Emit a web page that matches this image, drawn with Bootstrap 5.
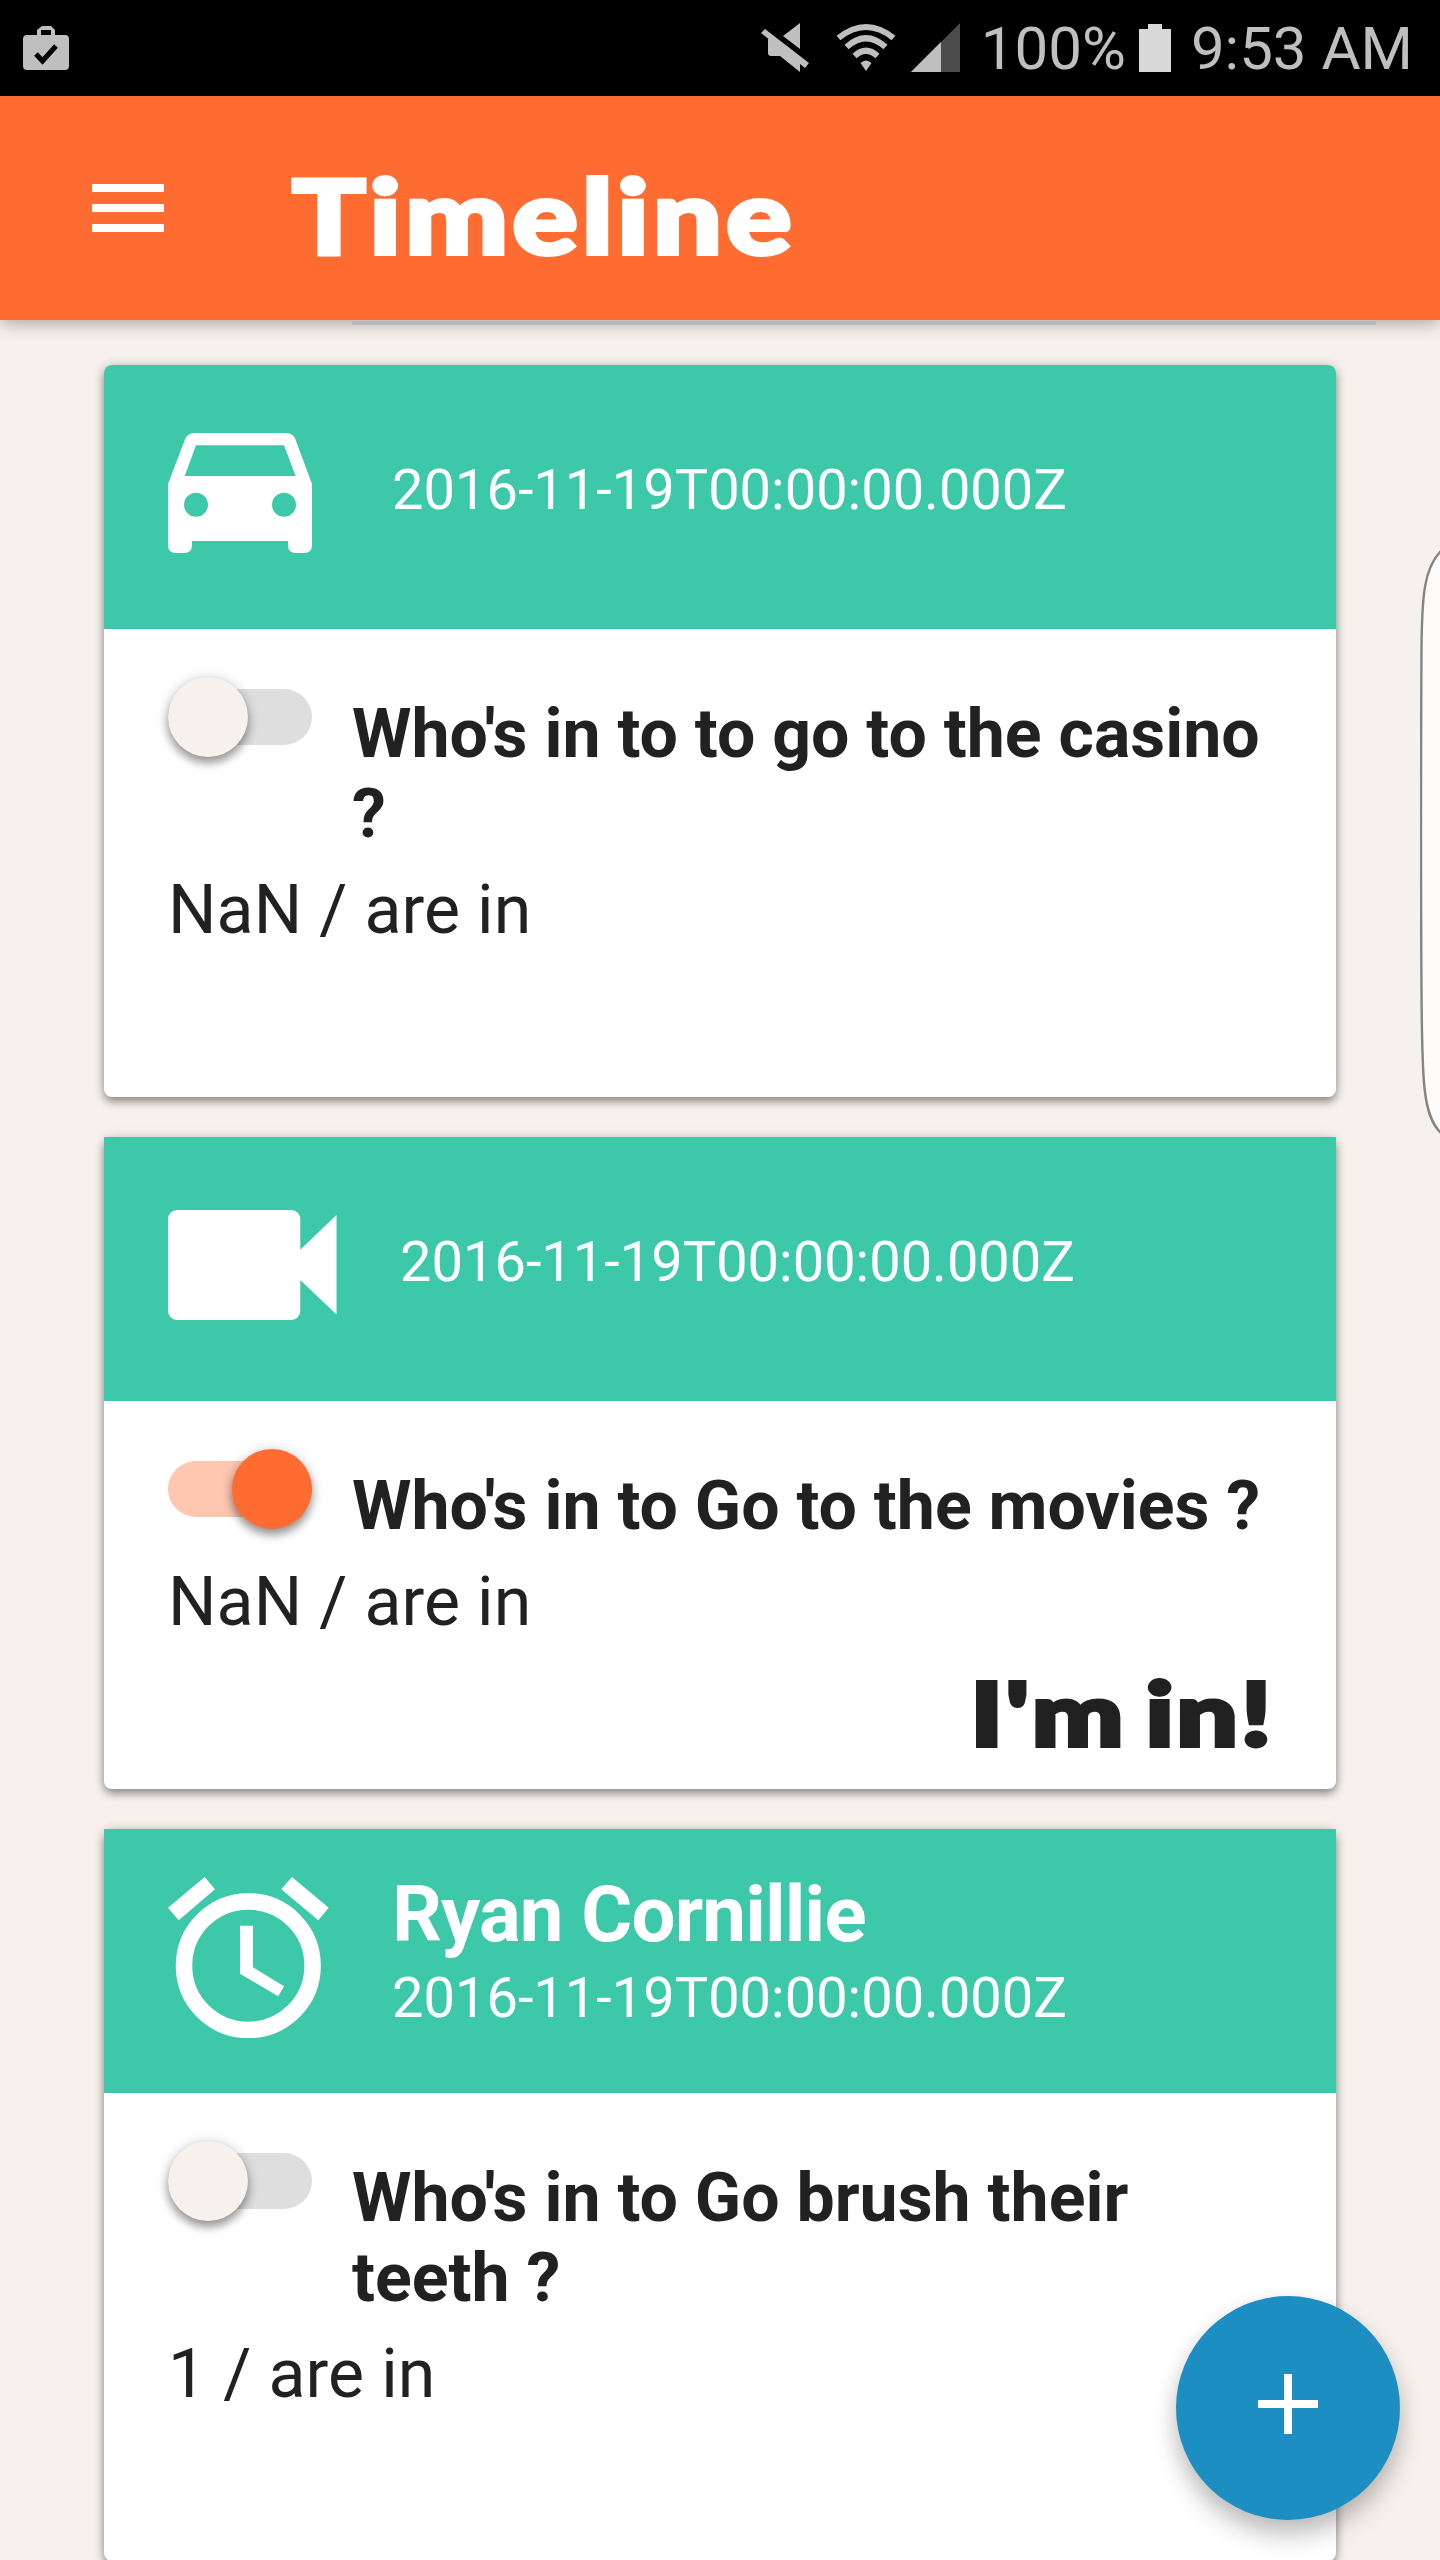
<!DOCTYPE html>
<html lang="en">
<head>
<meta charset="utf-8">
<meta name="viewport" content="width=device-width, initial-scale=1">
<title>Timeline</title>
<link href="https://cdn.jsdelivr.net/npm/bootstrap@5.3.0/dist/css/bootstrap.min.css" rel="stylesheet">
<style>
  body { font-family: Roboto, sans-serif; background: #f7f1ed; color: #212121; width: 1440px; height: 2560px; overflow: hidden; }
  svg { display: block; flex: none; }
  .statusbar { height: 96px; background: #000; color: #bfbfbf; font-size: 60px; line-height: 70px; padding: 0 27px 0 22px; }
  .statusbar span { white-space: nowrap; padding-top: 2px; }
  .appbar { height: 224px; background: #ff6c32; padding: 0 0 0 92px; box-shadow: 0 4px 16px rgba(0,0,0,.3); z-index: 2; }
  .display-face { font-family: Lato, sans-serif; font-weight: 900; white-space: nowrap; }
  .appbar h1 { font-size: 102px; line-height: 120px; color: #fff; margin: 14px 0 0 128px; letter-spacing: 3.3px; -webkit-text-stroke: 4px #fff; transform: scaleX(1.2); transform-origin: left; }
  .prev-edge { height: 4px; margin: 1px 64px 0 352px; background: #b8b8b6; z-index: 3; }
  .feed { padding: 40px 104px 0; }
  .event { border: 0; border-radius: 8px; height: 732px; margin-bottom: 40px; background: #fff; box-shadow: 0 5px 9px rgba(0,0,0,.36), 0 0 12px rgba(0,0,0,.16); }
  .event-short { height: 652px; }
  .event-head { height: 264px; background: #3ec8aa; color: #fff; padding: 0 64px 8px; }
  .event:first-child .event-head { border-radius: 8px 8px 0 0; }
  .event-icon { width: 224px; }
  .event-icon-wide { width: 232px; }
  .stamp { font-size: 56px; line-height: 76px; white-space: nowrap; padding-bottom: 6px; }
  .owner + .stamp { padding-bottom: 8px; }
  .owner { font-size: 78px; line-height: 90px; font-weight: 700; white-space: nowrap; letter-spacing: -.85px; }
  .event-main { padding: 48px 64px 0; }
  .switch { width: 144px; height: 56px; border-radius: 28px; background: #dedede; margin: 12px 40px 0 0; flex: none; }
  .switch i { display: block; width: 80px; height: 80px; border-radius: 50%; margin-top: -12px; background: #f7f1ed; box-shadow: 0 6px 10px rgba(0,0,0,.38), 0 0 14px rgba(0,0,0,.13); }
  .switch.active { background: #ffc6b0; }
  .switch.active i { background: #ff6c32; margin-left: 64px; }
  .question { font-size: 68px; line-height: 80px; font-weight: 700; padding-top: 17px; margin: 0; }
  .tally { font-size: 68px; line-height: 96px; margin: 8px 0 0; letter-spacing: .1px; }
  .answer { font-size: 87px; line-height: 110px; margin: 8px -2px 0 0; text-align: right; letter-spacing: 2px; word-spacing: -7px; -webkit-text-stroke: 4px #212121; transform: scaleX(1.25); transform-origin: right; }
  .edge-handle { position: absolute; right: 0; top: 548px; z-index: 1; }
  .fab { position: absolute; left: 1176px; top: 2296px; width: 224px; height: 224px; padding: 0 0 8px; background: #1d8ec1; border: 0; z-index: 4; box-shadow: 0 16px 24px rgba(0,0,0,.22), 0 4px 20px rgba(0,0,0,.08); }
</style>
</head>
<body class="position-relative">
<header class="statusbar d-flex align-items-center">
  <svg class="me-auto" width="48" height="46" viewBox="0 0 48 46"><path fill="#bfbfbf" fill-rule="evenodd" d="M15 10V5l5-4h9l4 4v5h10q4 0 4 4v27q0 4-4 4H5q-4 0-4-4V14q0-4 4-4zM19 10h10V5H19z"/><path d="M14 29l6.500 7L34 21" fill="none" stroke="#000" stroke-width="5"/></svg>
  <svg width="49" height="50" viewBox="0 0 49 50" fill="#bfbfbf"><path d="M4 6l44 34-4 5L0 10z"/><path d="M39 0v26L22 13z"/><path d="M7 16v14q0 3 3 3h9l20 16V37L12 16z"/></svg>
  <svg width="60" height="50" viewBox="0 0 60 50" style="margin-left:26px"><g fill="none" stroke="#bfbfbf" stroke-width="6"><path d="M2.500 15Q30-7 57.500 15"/><path d="M10.500 24Q30 6.500 49.500 24"/><path d="M18.500 33Q30 22.500 41.500 33"/></g><path fill="#bfbfbf" d="M24.500 40q5.500-5 11 0L30 48z"/></svg>
  <svg width="49" height="50" viewBox="0 0 49 50" style="margin-left:15px"><path fill="#4c4c4c" d="M49 0v49H0z"/><path fill="#bfbfbf" d="M30 19v30H0z"/></svg>
  <span style="margin-left:21px">100%</span>
  <svg width="32" height="48" viewBox="0 0 32 48" style="margin-left:13px"><path fill="#d8d8d8" d="M9 0h14v5h9v43H0V5h9z"/></svg>
  <span style="margin-left:20px">9:53 AM</span>
</header>
<nav class="appbar d-flex align-items-center position-relative">
  <svg width="72" height="48" viewBox="0 0 72 48" fill="#fff"><path d="M0 0h72v8H0zM0 20h72v8H0zM0 40h72v8H0z"/></svg>
  <h1 class="display-face">Timeline</h1>
</nav>
<div class="prev-edge position-relative"></div>
<main class="feed">
  <section class="card event">
    <div class="event-head d-flex align-items-center">
      <div class="event-icon"><svg width="144" height="120" viewBox="0 0 144 120" fill="#fff"><path fill-rule="evenodd" d="M26 0H118Q125 0 127.500 6.500L144 51V112Q144 120 136 120H128Q120 120 120 112V108H24V112Q24 120 16 120H8Q0 120 0 112V51L17 6.500Q19.500 0 26 0ZM28 12.300L16.700 43H127.700L116 12.300ZM16 71.700a12 12 0 1 0 24 0a12 12 0 1 0-24 0ZM104 71.700a12 12 0 1 0 24 0a12 12 0 1 0-24 0Z"/></svg></div>
      <div class="stamp">2016-11-19T00:00:00.000Z</div>
    </div>
    <div class="event-main">
      <div class="d-flex align-items-start"><div class="switch"><i></i></div><h2 class="question">Who's in to to go to the casino<br>?</h2></div>
      <p class="tally">NaN / are in</p>
    </div>
  </section>
  <section class="card event event-short">
    <div class="event-head d-flex align-items-center">
      <div class="event-icon event-icon-wide"><svg width="169" height="110" viewBox="0 0 169 110" fill="#fff"><rect width="132.300" height="110" rx="9"/><path d="M132 40L168.500 5V104.500L132 69.700z"/></svg></div>
      <div class="stamp">2016-11-19T00:00:00.000Z</div>
    </div>
    <div class="event-main">
      <div class="d-flex align-items-start"><div class="switch active"><i></i></div><h2 class="question">Who's in to Go to the movies ?</h2></div>
      <p class="tally">NaN / are in</p>
      <div class="answer display-face">I'm in!</div>
    </div>
  </section>
  <section class="card event">
    <div class="event-head d-flex align-items-center">
      <div class="event-icon"><svg width="161" height="161" viewBox="0 0 161 161" fill="#fff"><circle cx="80.300" cy="88.700" r="64.300" fill="none" stroke="#fff" stroke-width="16.500"/><path d="M0 30.700L36.700 0 47 12.300 10.700 43.300zM160.700 30.700L124 0 113.300 12.300 150.300 43.300zM72 48.700H85V90.300L116 109.300 110.300 119.300 72 96.700z"/></svg></div>
      <div><div class="owner">Ryan Cornillie</div><div class="stamp">2016-11-19T00:00:00.000Z</div></div>
    </div>
    <div class="event-main">
      <div class="d-flex align-items-start"><div class="switch"><i></i></div><h2 class="question">Who's in to Go brush their<br>teeth ?</h2></div>
      <p class="tally">1 / are in</p>
    </div>
  </section>
</main>
<svg class="edge-handle" width="20" height="588" viewBox="0 0 20 588"><path d="M21 3C4 20 2 48 1.500 100Q.5 294 1.500 440C2 535 3 568 21 585" fill="#fcfbf9" stroke="#858480" stroke-width="2.400"/></svg>
<button class="fab btn rounded-circle d-flex align-items-center justify-content-center" aria-label="Add"><svg width="60" height="60" viewBox="0 0 60 60" fill="#fff"><path d="M26 0h8v26h26v8H34v26h-8V34H0v-8h26z"/></svg></button>
<script src="https://cdn.jsdelivr.net/npm/bootstrap@5.3.0/dist/js/bootstrap.bundle.min.js"></script>
</body>
</html>
